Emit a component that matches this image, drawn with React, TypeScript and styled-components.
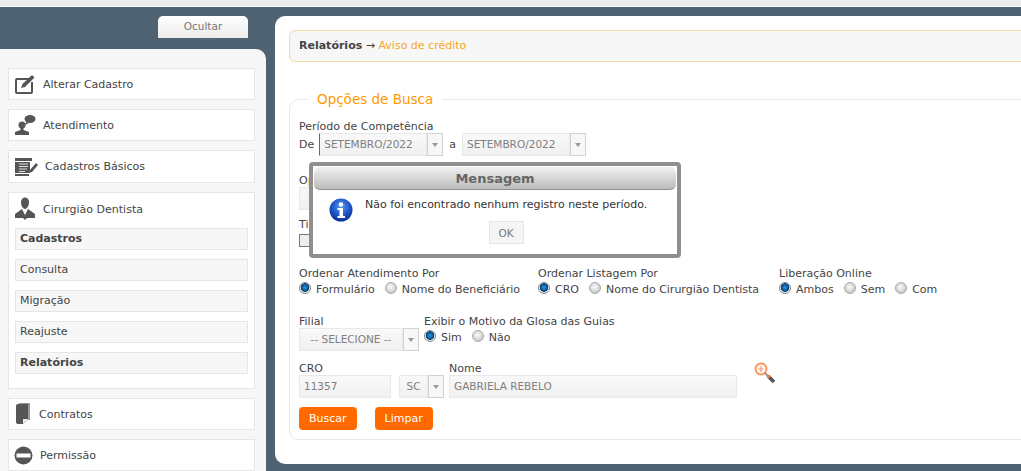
import React from 'react';
import styled, { createGlobalStyle } from 'styled-components';

const GlobalStyle = createGlobalStyle`
  html, body {
    margin: 0;
    padding: 0;
    height: 471px;
    overflow: hidden;
    background: #4f6272;
    font-family: "DejaVu Sans", Verdana, sans-serif;
    font-size: 11px;
    color: #444;
  }
`;

const TopBar = styled.div`
  height: 6px;
  background: #ececec;
  border-bottom: 1px solid #fff;
`;

const Page = styled.div`
  display: flex;
  gap: 9px;
  padding-top: 9px;
  width: 1300px;
`;

const SideColumn = styled.div`
  width: 266px;
  flex: none;
  display: flex;
  flex-direction: column;
  align-items: flex-start;
`;

const HideTab = styled.div`
  width: 90px;
  height: 22px;
  margin: 0 0 11px 158px;
  padding-top: 4px;
  box-sizing: border-box;
  border-radius: 5px 5px 0 0;
  background: linear-gradient(#fff, #ececec);
  color: #777;
  font-size: 10.5px;
  line-height: 13px;
  text-align: center;
  position: relative;
`;

const HiddenWord = styled.span`
  display: block;
  height: 5px;
  overflow: hidden;
`;

const TabTail = styled.div`
  height: 5px;
  margin: -11px 0 6px 158px;
  width: 90px;
  color: #5f6f7c;
  font-size: 10.5px;
  line-height: 13px;
  text-align: center;
  overflow: hidden;
  position: relative;
  & > span { display: block; margin-top: -8px; }
`;

const SidePanel = styled.nav`
  width: 266px;
  height: 430px;
  box-sizing: border-box;
  padding: 19px 11px 0 8px;
  background: #f7f7f7;
  border-radius: 0 10px 0 0;
  display: flex;
  flex-direction: column;
  gap: 9px;
`;

const MenuCard = styled.div<{ $h: number }>`
  height: ${p => p.$h}px;
  box-sizing: border-box;
  flex: none;
  background: #fff;
  border: 1px solid #e6e6e6;
  padding: 0 6px;
`;

const MenuHead = styled.div<{ $h: number }>`
  height: ${p => p.$h}px;
  display: flex;
  align-items: center;
  gap: 7px;
  margin-left: -1px;
  font-size: 11px;
  color: #444;
  & > svg { flex: none; }
`;

const SubList = styled.div`
  display: flex;
  flex-direction: column;
  gap: 9px;
  margin-top: 3px;
`;

const SubItem = styled.div<{ $bold?: boolean }>`
  height: 22px;
  box-sizing: border-box;
  background: #f7f7f7;
  border: 1px solid #e6e6e6;
  padding-left: 4px;
  line-height: 20px;
  font-size: 11px;
  font-weight: ${p => (p.$bold ? 700 : 400)};
  color: #444;
`;

const Main = styled.main`
  width: 900px;
  height: 448px;
  flex: none;
  box-sizing: border-box;
  padding: 14px 0 0 14px;
  background: #fff;
  border-radius: 10px;
  position: relative;
`;

const Breadcrumb = styled.div`
  height: 32px;
  box-sizing: border-box;
  background: #f7f7f7;
  border: 1px solid #f7d8a8;
  border-radius: 6px;
  padding-left: 9px;
  line-height: 30px;
  font-size: 11px;
  color: #444;
  & > b { font-weight: 700; }
  & > span { color: #f6a623; }
`;

const SearchBox = styled.fieldset`
  margin: 29px 0 0;
  padding: 13px 9px 0;
  height: 349px;
  box-sizing: border-box;
  border: 1px solid #e8e8e8;
  border-radius: 10px;
  min-width: 0;
`;

const SearchLegend = styled.legend`
  margin-left: 9px;
  padding: 0 9px 0 9px;
  color: #ff9900;
  font-size: 13.5px;
  line-height: 16px;
`;

const FieldLabel = styled.div`
  line-height: 13px;
  font-size: 11px;
  color: #444;
`;

const Row = styled.div<{ $gap?: number; $top?: number }>`
  display: flex;
  align-items: flex-start;
  gap: ${p => p.$gap ?? 0}px;
  margin-top: ${p => p.$top ?? 0}px;
`;

const InlineRow = styled.div`
  display: flex;
  align-items: center;
  height: 23px;
`;

const Word = styled.span<{ $l?: number; $r?: number }>`
  margin-left: ${p => p.$l ?? 0}px;
  margin-right: ${p => p.$r ?? 0}px;
`;

const Field = styled.div<{ $w: number; $marked?: boolean; $center?: boolean }>`
  width: ${p => p.$w}px;
  height: 23px;
  box-sizing: border-box;
  flex: none;
  background: linear-gradient(#f9f9f9, #f0f0f0);
  border: 1px solid #e8e8e8;
  border-left: 1px solid ${p => (p.$marked ? '#e33' : '#e8e8e8')};
  color: #808080;
  font-size: 10.5px;
  line-height: 21px;
  padding-left: ${p => (p.$center ? 0 : 4)}px;
  text-align: ${p => (p.$center ? 'center' : 'left')};
  white-space: nowrap;
`;

const Arrow = styled.div`
  width: 16px;
  height: 23px;
  flex: none;
  box-sizing: border-box;
  border: 1px solid #d2d2d2;
  background: #f7f7f7;
  display: flex;
  align-items: center;
  justify-content: center;
  &::after {
    content: '';
    border: 3.5px solid transparent;
    border-top: 4px solid #999;
    border-bottom: 0;
  }
`;

const RadioDot = styled.span<{ $on?: boolean }>`
  display: inline-block;
  width: 12px;
  height: 12px;
  flex: none;
  border-radius: 50%;
  box-sizing: border-box;
  border: 1px solid ${p => (p.$on ? '#888' : '#aaa')};
  margin-top: -3px;
  background: ${p =>
    p.$on
      ? 'radial-gradient(circle at 50% 45%, #2a9be0 0, #0a5a9e 3px, #0c3d6e 4px, #eee 4.6px, #ddd 6px)'
      : 'radial-gradient(circle at 45% 40%, #fafafa 0, #e2e2e2 3px, #c6c6c6 6px)'};
`;

const RadioGroup = styled.div<{ $left?: number }>`
  display: flex;
  align-items: center;
  height: 18px;
  margin-left: ${p => p.$left ?? 0}px;
  font-size: 11px;
`;

const RadioText = styled.span<{ $r?: number }>`
  margin-left: 5px;
  margin-right: ${p => p.$r ?? 0}px;
`;

const Column = styled.div<{ $w: number }>`
  width: ${p => p.$w}px;
  flex: none;
`;

const Check = styled.div`
  width: 13px;
  height: 13px;
  box-sizing: border-box;
  border: 1px solid #777;
  background: #eee;
  margin-top: 3px;
`;

const OrangeButton = styled.button`
  height: 23px;
  border: 0;
  border-radius: 4px;
  background: #ff6a00;
  color: #fff;
  font: 11px "DejaVu Sans", Verdana, sans-serif;
  padding: 0 10px;
`;

const Dialog = styled.div`
  position: absolute;
  left: 34px;
  top: 146px;
  width: 372px;
  height: 96px;
  box-sizing: border-box;
  padding: 1px;
  background: #fff;
  border: 4px solid #8f8f8f;
  border-radius: 4px;
`;

const DialogTitle = styled.div`
  height: 23px;
  border-radius: 6px;
  background: linear-gradient(#f0f0f0, #bdbdbd);
  border-bottom: 1px solid #8f8f8f;
  box-sizing: border-box;
  text-align: center;
  font-size: 13px;
  font-weight: 700;
  line-height: 23px;
  color: #666;
`;

const DialogBody = styled.div`
  display: flex;
  gap: 12px;
  padding: 8px 0 0 15px;
`;

const DialogContent = styled.div`
  display: flex;
  flex-direction: column;
  align-items: center;
  font-size: 11px;
  color: #333;
  line-height: 14px;
`;

const OkButton = styled.div`
  width: 35px;
  height: 23px;
  box-sizing: border-box;
  margin-top: 9px;
  background: #f5f5f5;
  border: 1px solid #e6e6e6;
  color: #777;
  text-align: center;
  line-height: 22px;
  font-size: 10.5px;
`;

const EditIcon = () => (
  <svg width="22" height="22" viewBox="0 0 22 22">
    <path d="M16 6H3a1 1 0 0 0-1 1v12a1 1 0 0 0 1 1h14a1 1 0 0 0 1-1V9" fill="none" stroke="#555" strokeWidth="2" />
    <path d="M7 15l1.5-4L18 2l2.5 2.5-9.500 9.500z" fill="#555" />
  </svg>
);

const ChatPersonIcon = () => (
  <svg width="22" height="22" viewBox="0 0 22 22">
    <ellipse cx="16" cy="5" rx="5.500" ry="4" fill="#555" />
    <path d="M12 8l-1 3 4-2z" fill="#555" />
    <circle cx="8" cy="11" r="3.500" fill="#555" />
    <path d="M6.500 14v2L1 18v3h14v-3l-5.500-2v-2z" fill="#555" />
  </svg>
);

const FormIcon = () => (
  <svg width="24" height="20" viewBox="0 0 24 20">
    <path d="M1 1h17v3H1zM1 5h15v11H1zM1 17h14v2H1z" fill="#555" />
    <path d="M5 7h9M5 9.500h9M5 12h8M5 14.500h6" stroke="#ddd" strokeWidth="1" />
    <path d="M22 6l2 2-6 7-3 1 1-3z" fill="#555" />
  </svg>
);

const DoctorIcon = () => (
  <svg width="22" height="24" viewBox="0 0 22 24">
    <path d="M7 5c0-6 8-6 8 0 0 4-2 7-4 7s-4-3-4-7z" fill="#555" />
    <path d="M8 12L1 17v4h8l2 2 2-2h8v-4l-7-5-3 6z" fill="#555" />
  </svg>
);

const BookIcon = () => (
  <svg width="18" height="22" viewBox="0 0 18 22">
    <path d="M5 0h11v17h-2V1H5z" fill="#999" />
    <path d="M2 3a2 2 0 0 1 2-2h10v15l-5 5H4a2 2 0 0 1-2-2z" fill="#555" />
    <path d="M9 21v-5h5z" fill="#eee" />
  </svg>
);

const BlockIcon = () => (
  <svg width="19" height="19" viewBox="0 0 19 19">
    <circle cx="9.500" cy="9.500" r="9" fill="#555" />
    <rect x="2.500" y="7.500" width="14" height="4" fill="#fff" />
  </svg>
);

const InfoIcon = () => (
  <svg width="24" height="24" viewBox="0 0 24 24">
    <defs>
      <radialGradient id="infoBlue" cx="50%" cy="35%" r="65%">
        <stop offset="0" stopColor="#5c9cf0" />
        <stop offset="0.6" stopColor="#1c54c8" />
        <stop offset="1" stopColor="#0a2f90" />
      </radialGradient>
    </defs>
    <circle cx="12" cy="12" r="11.500" fill="url(#infoBlue)" />
    <circle cx="12" cy="6.500" r="2.200" fill="#fff" />
    <path d="M8.500 10h5.500v8h2v2H8.500v-2h2v-6h-2z" fill="#fff" />
  </svg>
);

const ZoomIcon = () => (
  <svg width="22" height="23" viewBox="0 0 22 23">
    <circle cx="7" cy="7" r="5.500" fill="#fff" stroke="#ff9360" strokeWidth="2" />
    <path d="M7 4v6M4 7h6" stroke="#ff9360" strokeWidth="1.200" />
    <path d="M11 11l3 3" stroke="#777" strokeWidth="1.500" />
    <path d="M14 14l6 6" stroke="#555" strokeWidth="3.500" />
    <path d="M13.500 13.500l2 2" stroke="#f08040" strokeWidth="3" />
  </svg>
);

export default function App() {
  return (
    <>
      <GlobalStyle />
      <TopBar />
      <Page>
        <SideColumn>
          <HideTab>
            Ocultar
            <HiddenWord />
          </HideTab>
          <TabTail>
            <span>Menu</span>
          </TabTail>
          <SidePanel>
            <MenuCard $h={32}>
              <MenuHead $h={30}><EditIcon />Alterar Cadastro</MenuHead>
            </MenuCard>
            <MenuCard $h={32}>
              <MenuHead $h={30}><ChatPersonIcon />Atendimento</MenuHead>
            </MenuCard>
            <MenuCard $h={33}>
              <MenuHead $h={31}><FormIcon />Cadastros Básicos</MenuHead>
            </MenuCard>
            <MenuCard $h={197}>
              <MenuHead $h={32}><DoctorIcon />Cirurgião Dentista</MenuHead>
              <SubList>
                <SubItem $bold>Cadastros</SubItem>
                <SubItem>Consulta</SubItem>
                <SubItem>Migração</SubItem>
                <SubItem>Reajuste</SubItem>
                <SubItem $bold>Relatórios</SubItem>
              </SubList>
            </MenuCard>
            <MenuCard $h={32}>
              <MenuHead $h={30}><BookIcon />Contratos</MenuHead>
            </MenuCard>
            <MenuCard $h={32}>
              <MenuHead $h={30}><BlockIcon />Permissão</MenuHead>
            </MenuCard>
          </SidePanel>
        </SideColumn>

        <Main>
          <Breadcrumb>
            <b>Relatórios</b> → <span>Aviso de crédito</span>
          </Breadcrumb>

          <SearchBox>
            <SearchLegend>Opções de Busca</SearchLegend>
            <FieldLabel>Período de Competência</FieldLabel>
            <InlineRow>
              <Word $r={5}>De</Word>
              <Field $w={108} $marked>SETEMBRO/2022</Field>
              <Arrow />
              <Word $l={6} $r={6}>a</Word>
              <Field $w={108}>SETEMBRO/2022</Field>
              <Arrow />
            </InlineRow>

            <FieldLabel style={{ marginTop: 18 }}>Operadora</FieldLabel>
            <Field $w={120} />
            <FieldLabel style={{ marginTop: 8 }}>Tipo</FieldLabel>
            <Check />

            <Row $top={20}>
              <Column $w={239}>
                <FieldLabel>Ordenar Atendimento Por</FieldLabel>
                <RadioGroup>
                  <RadioDot $on /><RadioText $r={10}>Formulário</RadioText>
                  <RadioDot /><RadioText>Nome do Beneficiário</RadioText>
                </RadioGroup>
              </Column>
              <Column $w={241}>
                <FieldLabel>Ordenar Listagem Por</FieldLabel>
                <RadioGroup>
                  <RadioDot $on /><RadioText $r={10}>CRO</RadioText>
                  <RadioDot /><RadioText>Nome do Cirurgião Dentista</RadioText>
                </RadioGroup>
              </Column>
              <Column $w={200}>
                <FieldLabel>Liberação Online</FieldLabel>
                <RadioGroup>
                  <RadioDot $on /><RadioText $r={10}>Ambos</RadioText>
                  <RadioDot /><RadioText $r={10}>Sem</RadioText>
                  <RadioDot /><RadioText>Com</RadioText>
                </RadioGroup>
              </Column>
            </Row>

            <Row $top={17} $gap={5}>
              <Column $w={120}>
                <FieldLabel>Filial</FieldLabel>
                <InlineRow>
                  <Field $w={104} $center>-- SELECIONE --</Field>
                  <Arrow />
                </InlineRow>
              </Column>
              <Column $w={300}>
                <FieldLabel>Exibir o Motivo da Glosa das Guias</FieldLabel>
                <RadioGroup>
                  <RadioDot $on /><RadioText $r={10}>Sim</RadioText>
                  <RadioDot /><RadioText>Não</RadioText>
                </RadioGroup>
              </Column>
            </Row>

            <Row $top={11}>
              <Column $w={100}>
                <FieldLabel>CRO</FieldLabel>
                <Field $w={92}>11357</Field>
              </Column>
              <Column $w={50}>
                <FieldLabel>&nbsp;</FieldLabel>
                <InlineRow>
                  <Field $w={29} $center>SC</Field>
                  <Arrow />
                </InlineRow>
              </Column>
              <Column $w={305}>
                <FieldLabel>Nome</FieldLabel>
                <Field $w={288}>GABRIELA REBELO</Field>
              </Column>
              <ZoomIcon />
            </Row>

            <Row $top={9} $gap={18}>
              <OrangeButton>Buscar</OrangeButton>
              <OrangeButton>Limpar</OrangeButton>
            </Row>
          </SearchBox>

          <Dialog>
            <DialogTitle>Mensagem</DialogTitle>
            <DialogBody>
              <InfoIcon />
              <DialogContent>
                Não foi encontrado nenhum registro neste período.
                <OkButton>OK</OkButton>
              </DialogContent>
            </DialogBody>
          </Dialog>
        </Main>
      </Page>
    </>
  );
}
